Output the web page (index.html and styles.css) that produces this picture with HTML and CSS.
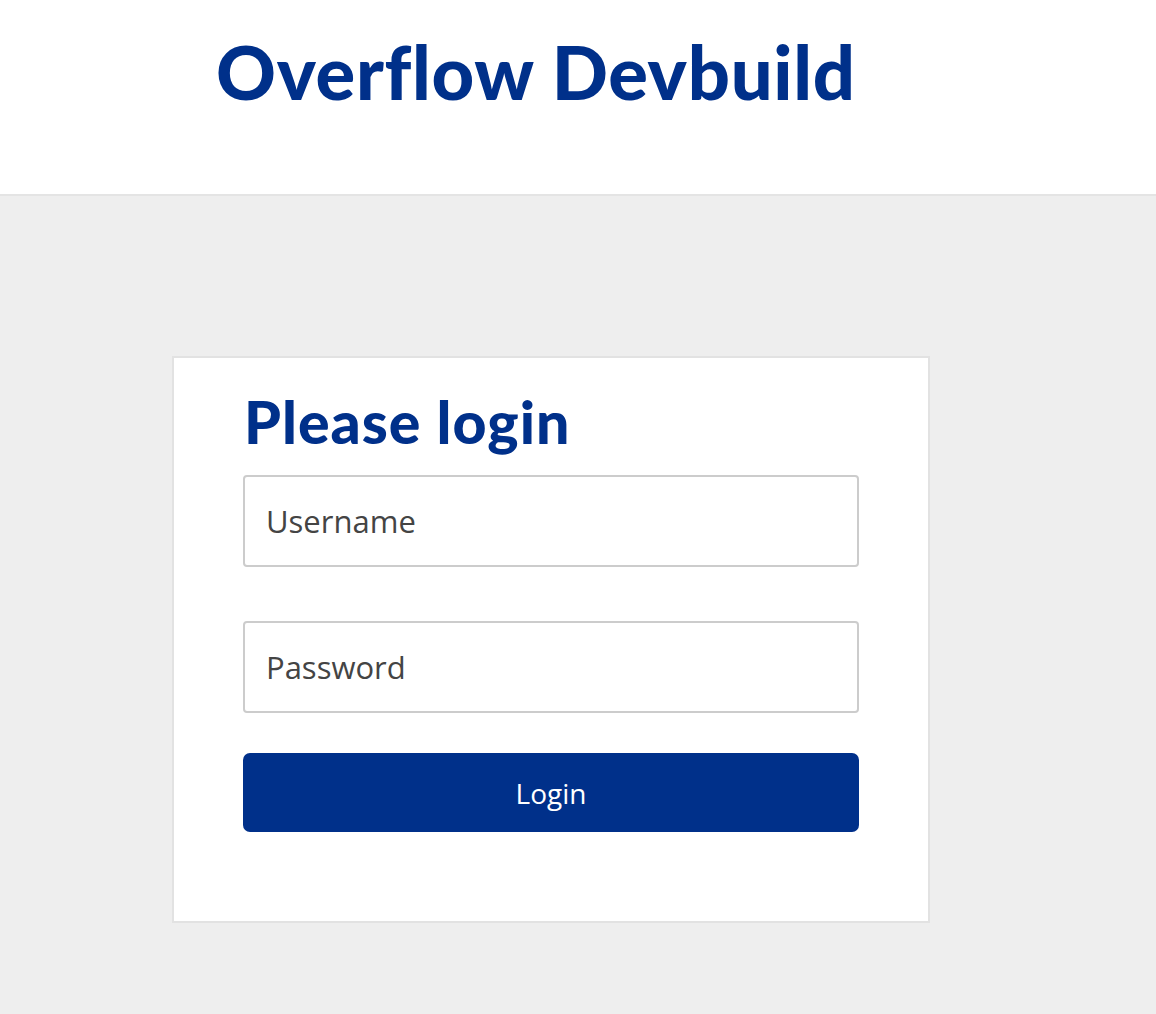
FILE: index.html
```html
<!DOCTYPE html>
<html>
<head>
    <title>Overflow Devbuild - Login</title>
    <link rel="stylesheet" href="styles.css">
</head>
<body>
    <header class="site-header">
        <h1 class="site-title">Overflow Devbuild</h1>
    </header>

    <main class="page">
        <form class="login-card" onsubmit="return false;">
            <h2 class="login-title">Please login</h2>
            <input class="field" type="text" name="username" placeholder="Username">
            <input class="field" type="password" name="password" placeholder="Password">
            <button class="login-btn" type="submit">Login</button>
        </form>
    </main>
</body>
</html>
```

FILE: styles.css
```css
html, body {
    margin: 0;
    padding: 0;
}
body {
    font-family: "Open Sans", "Liberation Sans", sans-serif;
    background: #eeeeee;
    min-height: 100vh;
}
.site-header {
    background: white;
    height: 196px;
    border-bottom: 2px solid #e4e4e4;
    box-sizing: border-box;
    padding: 24px 0 0 216px;
}
.site-title {
    margin: 0;
    font-family: "Lato", "Open Sans", sans-serif;
    font-weight: 900;
    font-size: 74px;
    line-height: 96px;
    color: #00308a;
    letter-spacing: 0.7px;
}
.page {
    padding: 160px 0 60px 172px;
}
.login-card {
    width: 758px;
    box-sizing: border-box;
    background: white;
    border: 2px solid #e2e2e2;
    padding: 28px 69px 89px 69px;
    display: flex;
    flex-direction: column;
}
.login-title {
    margin: 0 0 17px 1px;
    font-family: "Lato", "Open Sans", sans-serif;
    font-weight: 900;
    font-size: 59px;
    line-height: 72px;
    color: #00308a;
    letter-spacing: 1px;
}
.field {
    height: 92px;
    box-sizing: border-box;
    border: 2px solid #cccccc;
    border-radius: 4px;
    padding: 0 21px;
    font-family: "Open Sans", sans-serif;
    font-size: 31px;
    color: #444;
    margin-bottom: 54px;
    outline: none;
}
.field:last-of-type {
    margin-bottom: 40px;
}
.field::placeholder {
    color: #444;
    opacity: 1;
}
.login-btn {
    height: 79px;
    background: #00308a;
    color: white;
    border: none;
    border-radius: 7px;
    font-family: "Open Sans", sans-serif;
    font-size: 28px;
    cursor: pointer;
}
```
